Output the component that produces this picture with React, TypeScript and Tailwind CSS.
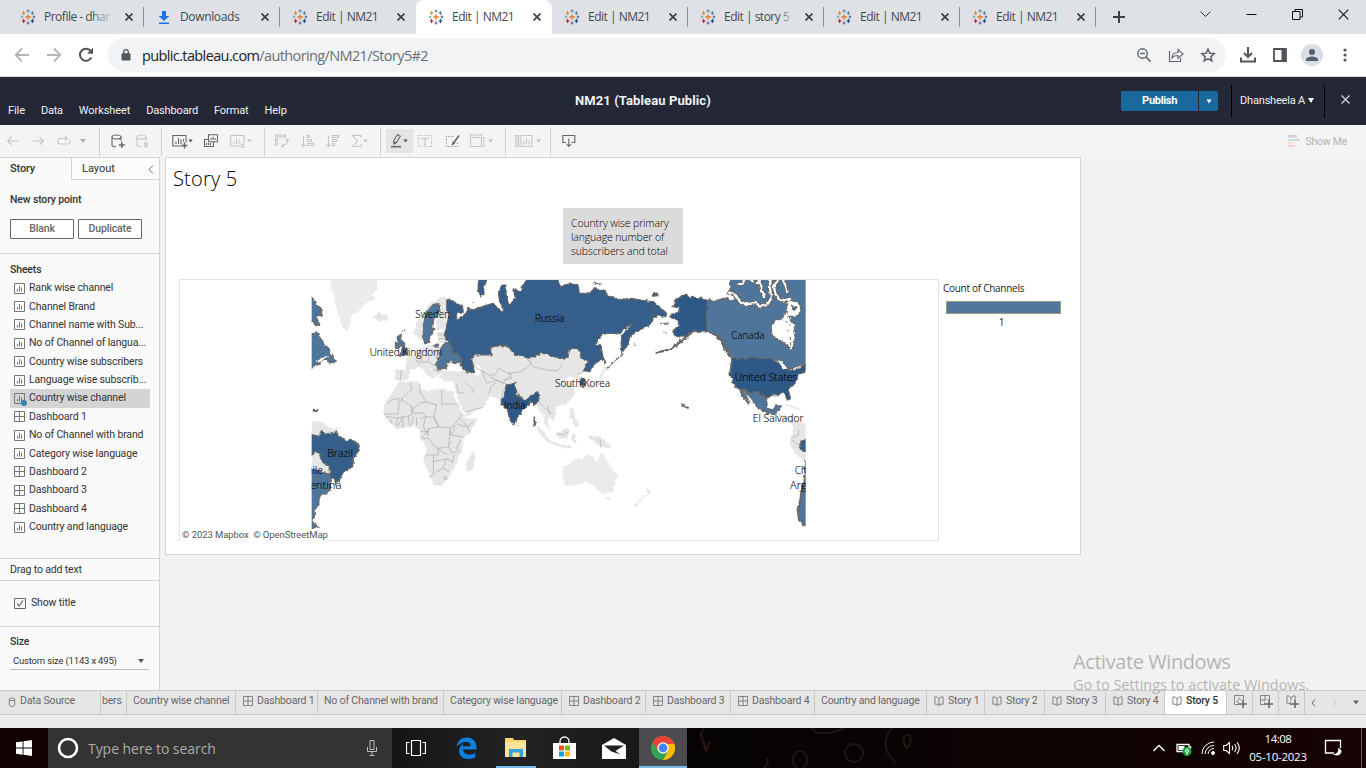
import React from "react";

const UI = "font-['Roboto','Liberation_Sans',sans-serif]";
const SEGOE = "font-['Open_Sans','Noto_Sans',sans-serif]";

function Tableau() {
  const plus = (x: number, y: number, r: number, c: string, w = 1.2) => (
    <path key={`${x}-${y}`} d={`M${x - r} ${y}h${2 * r}M${x} ${y - r}v${2 * r}`} stroke={c} strokeWidth={w} />
  );
  return (
    <svg width="16" height="16" viewBox="0 0 16 16" fill="none">
      {plus(8, 8, 2.8, "#eb7b30", 1.4)}
      {plus(8, 2, 1.4, "#5b879b")}
      {plus(8, 14, 1.4, "#5c6692")}
      {plus(2, 8, 1.4, "#7aa3b0", 1)}
      {plus(14, 8, 1.4, "#5c6692")}
      {plus(3.6, 4, 1.9, "#eb912b")}
      {plus(12.4, 4, 1.9, "#59879b")}
      {plus(3.6, 12, 1.9, "#c72035")}
      {plus(12.4, 12, 1.9, "#1f447e")}
    </svg>
  );
}

function X({ size = 8, color = "#3c4043", w = 1.8 }: { size?: number; color?: string; w?: number }) {
  return (
    <svg width={size} height={size} viewBox="0 0 8 8" className="shrink-0">
      <path d="M.5 .5L7.5 7.5M7.5 .5L.5 7.5" stroke={color} strokeWidth={w * 8 / size} />
    </svg>
  );
}

const browserTabs = ["Profile - dhar", "Downloads", "Edit | NM21", "Edit | NM21", "Edit | NM21", "Edit | story 5", "Edit | NM21", "Edit | NM21"];

function BrowserTabs() {
  return (
    <div className="flex h-[34px] shrink-0 bg-[#dee1e6] pl-2">
      {browserTabs.map((t, i) => (
        <div key={i} className={`relative flex h-[34px] w-[136px] shrink-0 items-center pl-3 ${i === 3 ? "rounded-t-lg bg-white" : ""}`}>
          {i === 1 ? (
            <svg width="16" height="16" viewBox="0 0 16 16" fill="#1a73e8"><path d="M6 2h4v5h3.3L8 12 2.700 7H6zM3 13.500h10V15H3z" /></svg>
          ) : <Tableau />}
          <div className="relative ml-2 w-[70px]">
            <span className={`${SEGOE} block whitespace-nowrap text-[12px] leading-[18px] text-[#45494d] ${i === 0 || i === 5 ? "tracking-[-0.5px]" : i === 1 ? "tracking-[-0.36px]" : "tracking-[-0.5px]"}`}>{t}</span>
            {(i === 0 || i === 5) && <div className={`absolute inset-y-0 right-0 bg-gradient-to-r from-[#dee1e600] to-[#dee1e6] ${i === 0 ? "w-6" : "w-4"}`} />}
          </div>
          <div className="ml-[11px] flex"><X w={1.7} /></div>
          {i !== 2 && i !== 3 && <div className="absolute right-0 top-[7px] h-5 w-px bg-[#8b8f94]" />}
        </div>
      ))}
      <div className="flex w-[46px] items-center justify-center">
        <svg width="12" height="12" viewBox="0 0 12 12"><path d="M0 6h12M6 0v12" stroke="#3c4043" strokeWidth="2" /></svg>
      </div>
      <div className="ml-auto flex items-start gap-[35px] pr-[17px] pt-[9px]">
        <svg width="11" height="11" viewBox="0 0 11 11" fill="none" stroke="#333"><path d="M.5 2.500l5 5 5-5" /></svg>
        <svg width="11" height="11" viewBox="0 0 11 11" stroke="#111"><path d="M.5 5.500h10" /></svg>
        <svg width="11" height="11" viewBox="0 0 11 11" fill="none" stroke="#111"><path d="M.5 2.500h7.500v8H.5zM3 2.500V.5h7.500v7.500H8" /></svg>
        <X size={11} color="#111" w={1.1} />
      </div>
    </div>
  );
}

function AddressBar() {
  return (
    <div className="flex h-[43px] shrink-0 items-center border-b border-[#d5d8dc] bg-white text-[#5f6368]">
      <svg className="ml-[14px]" width="16" height="16" viewBox="0 0 16 16" fill="none" stroke="#b4b7ba" strokeWidth="1.8"><path d="M15 8H2M8 1.500L1.700 8 8 14.500" /></svg>
      <svg className="ml-4" width="16" height="16" viewBox="0 0 16 16" fill="none" stroke="#b4b7ba" strokeWidth="1.8"><path d="M1 8h13M8 1.500L14.300 8 8 14.500" /></svg>
      <svg className="ml-4" width="16" height="16" viewBox="0 0 16 16"><path d="M13.300 10.500A6 6 0 1 1 12.600 4" fill="none" stroke="#50545a" strokeWidth="2" /><path d="M15 .8v6H9z" fill="#50545a" /></svg>
      <div className="ml-[14px] flex h-[34px] w-[1118px] items-center rounded-full bg-[#f1f3f4] pl-[13px]">
        <svg width="10" height="12" viewBox="0 0 10 12"><path d="M1 4.800h8V11H1z" fill="#54585d" stroke="#54585d" /><path d="M2.700 5V3a2.300 2.300 0 0 1 4.600 0v2" fill="none" stroke="#54585d" strokeWidth="1.300" /></svg>
        <span className={`${SEGOE} ml-[11px] mt-px text-[14.5px] tracking-[-0.62px] text-[#6b6f74]`}><span className="text-[#202124]">public.tableau.com</span>/authoring/NM21/Story5#2</span>
        <div className="ml-auto flex items-center gap-4 pr-[10px]">
          <svg width="16" height="16" viewBox="0 0 16 16" fill="none" stroke="#5f6368" strokeWidth="1.4"><circle cx="6.500" cy="6.500" r="4.700" /><path d="M4.200 6.500h4.600M10 10l4.600 4.600" strokeWidth="1.600" /></svg>
          <svg width="16" height="16" viewBox="0 0 16 16" fill="none" stroke="#5f6368" strokeWidth="1.1"><path d="M1.500 4v10.500h11V11M4 11c0-3 1.500-5.500 6-5.500V2.500L15 7l-5 4.300V8.500C7 8.500 5.200 9.200 4 11z" /></svg>
          <svg width="16" height="16" viewBox="0 0 16 16" fill="none" stroke="#5f6368" strokeWidth="1.500"><path d="M8 2l1.800 4.200 4.500.4-3.400 3 1 4.400L8 11.700 4.100 14l1-4.400-3.400-3 4.500-.4z" /></svg>
        </div>
      </div>
      <svg className="ml-[14px]" width="16" height="16" viewBox="0 0 16 16" fill="none" stroke="#50545a" strokeWidth="2"><path d="M8 0v9M4 6l4 4 4-4M1 10.500V14.500h14V10.500" /></svg>
      <svg className="ml-4" width="16" height="16" viewBox="0 0 16 16"><path d="M2 2h12v12H2z" fill="none" stroke="#50545a" strokeWidth="1.800" /><path d="M9.500 2H14v12H9.500z" fill="#50545a" /></svg>
      <svg className="ml-[13px]" width="22" height="22" viewBox="0 0 22 22"><circle cx="11" cy="11" r="11" fill="#dadde3" /><circle cx="11" cy="8" r="3" fill="#525e75" /><path d="M5 17v-1.500c0-2 4-3 6-3s6 1 6 3V17z" fill="#525e75" /></svg>
      <svg className="ml-[19.5px]" width="4" height="16" viewBox="0 0 4 16" fill="#50545a"><circle cx="2" cy="3" r="1.600" /><circle cx="2" cy="8" r="1.600" /><circle cx="2" cy="13" r="1.600" /></svg>
    </div>
  );
}

function Header() {
  return (
    <div className={`${UI} flex h-12 shrink-0 bg-[#242736] text-[#f0f0f2]`}>
      <div className="flex w-[575px] items-end gap-4 pb-[7px] pl-2 text-[11px] leading-[15px] tracking-[-0.1px]">
        <span>File</span><span className="tracking-[-0.2px]">Data</span><span>Worksheet</span><span className="tracking-[-0.15px]">Dashboard</span><span>Format</span><span>Help</span>
      </div>
      <div className="flex items-center text-[13px] font-bold tracking-[0.1px]">NM21 (Tableau Public)</div>
      <div className="ml-auto flex items-center">
        <div className="flex h-5 w-[77px] items-center justify-center rounded-l-[2px] bg-[#1a699e] text-[11px] font-bold tracking-[-0.3px] text-white">Publish</div>
        <div className="ml-px flex h-5 w-[19px] items-center justify-center rounded-r-[2px] bg-[#1a699e]"><svg width="6" height="5" viewBox="0 0 6 5"><path d="M.5 .5h5L3 4.500z" fill="#fff" /></svg></div>
        <div className="ml-[13px] h-8 w-px bg-black" />
        <span className="ml-2 text-[11px] tracking-[-0.2px]">Dhansheela A</span>
        <svg className="ml-[3px]" width="6" height="6" viewBox="0 0 6 6"><path d="M0 0h6L3 5z" fill="#fff" /></svg>
        <div className="ml-[10px] h-8 w-px bg-black" />
        <div className="mb-1 ml-4 mr-[16px]"><X size={9} color="#cfd0d4" w={1.3} /></div>
      </div>
    </div>
  );
}

function Ico({ children, dim, cls = "", w = 16 }: { children: React.ReactNode; dim?: boolean; cls?: string; w?: number }) {
  return (
    <svg className={`shrink-0 ${cls}`} width={w} height="16" viewBox={`0 0 ${w} 16`} fill="none" stroke={dim ? "#c6c6c6" : "#666"} strokeWidth="1.1">{children}</svg>
  );
}
const Caret = ({ dim, cls = "" }: { dim?: boolean; cls?: string }) => (
  <svg className={`shrink-0 ${cls}`} width="5" height="4" viewBox="0 0 5 4"><path d="M.3 .5h4.400L2.500 3.500z" fill={dim ? "#bdbdbd" : "#555"} /></svg>
);
const Sep = ({ cls = "" }: { cls?: string }) => <div className={`h-[29px] w-px shrink-0 bg-[#d0d0d0] ${cls}`} />;

function Toolbar() {
  return (
    <div className="flex h-8 shrink-0 items-center bg-[#f4f4f4]">
      <Ico dim cls="ml-[5px]"><path d="M13.500 8h-11M6.500 4l-4 4 4 4" /></Ico>
      <Ico dim cls="ml-[9px]"><path d="M2.500 8h11M9.500 4l4 4-4 4" /></Ico>
      <Ico dim cls="ml-[10px]"><path d="M10 5.500H4.500a2.700 2.700 0 0 0 0 5.500h7a2.700 2.700 0 0 0 2.200-4.500M9 3.500l2.300 2L9 7.500" /></Ico>
      <svg className="ml-2 shrink-0" width="6" height="4" viewBox="0 0 6 4"><path d="M0 0h6L3 4z" fill="#b0b0b0" /></svg>
      <Sep cls="ml-[13px]" />
      <Ico cls="ml-[10px]"><ellipse cx="6.500" cy="4" rx="4.500" ry="2" /><path d="M2 4v8c0 1 2 1.800 4 1.800M11 4v4" /><path d="M8.800 12h6M11.800 9v6" strokeWidth="1.500" /></Ico>
      <Ico dim cls="ml-[9px]"><ellipse cx="6.500" cy="4" rx="4.500" ry="2" /><path d="M2 4v8c0 1 2 1.800 4 1.800M11 4v4" /><path d="M9.700 9v5.500M11.800 9v5.500" strokeWidth="1.500" /></Ico>
      <Sep cls="ml-[10px]" />
      <Ico cls="ml-[10px]"><path d="M10 13H.8V2.500H14v7M4 11V8.500M6.500 11V5M9 11V6.500M11.500 8.500V6" /><path d="M9.500 12.500h6M12.500 9.500v6" strokeWidth="1.500" /></Ico>
      <Caret cls="ml-0" />
      <Ico cls="ml-[10px]"><path d="M5.500 1.800h9v7h-9zM8 7V5M10 7V3.500M12 7V5M5 6.500H1.500v7h9V9" /><path d="M3.500 12v-2M5.500 12v-2M7.500 12v-2" /></Ico>
      <Ico dim cls="ml-[11px]"><path d="M10 13H.8V2.500H14v7M4 11V8.500M6.500 11V5M9 11V6.500M10.500 10.500l4 4M14.500 10.500l-4 4" /></Ico>
      <Caret dim cls="ml-px" />
      <Sep cls="ml-[12px]" />
      <Ico dim cls="ml-[9px]"><path d="M1.500 2h2v2h-2zM5.500 2h2v2h-2zM9.500 2h2v2h-2zM1.500 6h2v2h-2zM1.500 10h2v2h-2zM13 6c1 5-1.500 6.500-5 7M11.500 7.500L13 6l2 1.500M9.500 11.200L7.500 13l2 1.700" /></Ico>
      <Ico dim cls="ml-[10px]"><path d="M3.500 2.500v11M1.500 11.500l2 2 2-2M7.500 2.500h2v2h-2zM7.500 6.500h4v2h-4zM7.500 10.500h6v2h-6z" /></Ico>
      <Ico dim cls="ml-[9px]"><path d="M3.500 2.500v11M1.500 11.500l2 2 2-2M7.500 2.500h6v2h-6zM7.500 6.500h4v2h-4zM7.500 10.500h2v2h-2z" /></Ico>
      <Ico dim cls="ml-[10px]"><path d="M10 5V2.500H1.500L6.500 8l-5 5.500H10V11" /></Ico>
      <Caret dim cls="ml-[-4px]" />
      <Sep cls="ml-[12px]" />
      <div className="ml-[5px] flex h-6 w-[27px] items-center bg-[#e4e4e4] pl-[4px]">
        <Ico w={12}><path d="M4 11l-.5-3 4-6.500 2.800 1.700L6.500 9.500zM3.500 8.500L6.300 10" /><path d="M1 13.700h10" strokeWidth="1.600" /></Ico>
        <Caret cls="ml-px" />
      </div>
      <Ico dim cls="ml-[4px]"><path d="M1.500 2.500h13v11h-13z" strokeDasharray="1.500 1" /><path d="M5 6.500V5.500h6v1M8 5.500v6M6.800 11.500h2.400" /></Ico>
      <Ico cls="ml-[12px]"><path d="M8 3.500H1.500v10h11v-5" strokeDasharray="1.500 1.500" stroke="#999" /><path d="M14 2.500L9 9.500M8.500 8.500l-.7 2.500 2-1.200" strokeWidth="1.600" /></Ico>
      <Ico dim cls="ml-[8px]"><path d="M1.500 4.500h11v9h-11zM1.500 1v2M12.500 1v2M1.500 2h11M13.800 4.500h2M13.800 13.500h2M14.800 4.500v9" /></Ico>
      <Caret dim cls="ml-[3px]" />
      <Sep cls="ml-[12px]" />
      <Ico dim cls="ml-[9px]" w={18}><path d="M.8 2.500h3v2.500h-3zM.8 6.700h3v2.500h-3zM.8 10.900h3v2.500h-3zM6 2.500h11v11H6zM9 11.500V8M11.500 11.500V5M14 11.500V7" /></Ico>
      <Caret dim cls="ml-[3px]" />
      <Sep cls="ml-[9px]" />
      <Ico cls="ml-[10px]"><path d="M5 9.500H1.800v-7h12v7H10.500M7.800 5.500v8M5.500 11l2.300 2.500 2.300-2.500" /></Ico>
      <svg className="ml-auto" width="12" height="14" viewBox="0 0 12 14"><path d="M0 1h9v2.500H0z" fill="#d2c9d9" /><path d="M0 5h12v2H0z" fill="#ccd9e8" /><path d="M0 8h5v2H0z" fill="#f9ddd0" /><path d="M0 11h7v2H0z" fill="#f4cccc" /></svg>
      <span className={`${UI} ml-[6px] mr-[19px] mt-[2px] text-[10.5px] leading-[14px] tracking-[-0.25px] text-[#b3b3b3]`}>Show Me</span>
    </div>
  );
}

type Kind = "sheet" | "dash" | "story" | "db";
function KindIcon({ kind, size = 11 }: { kind: Kind; size?: number }) {
  return (
    <svg className="shrink-0" width={size} height={size} viewBox="0 0 11 11" fill="none" stroke="#777" strokeWidth="1">
      {kind === "sheet" && <path d="M.5 .5h10v10H.5zM3.500 8.500V6M5.500 8.500V3M7.500 8.500V4.500" />}
      {kind === "dash" && <path d="M.5 .5h10v10H.5zM5.500 .5v10M.5 5.500h10" />}
      {kind === "story" && <path d="M3.500 9H1V1h2l2.500 2L8 1h2v8H7.500M5.500 3v7.500M3.500 9l2 1.500 2-1.500" />}
      {kind === "db" && <path d="M2.500 2.500v6c0 2.500 6 2.500 6 0v-6c0-2-6-2-6 0s6 2 6 0" />}
    </svg>
  );
}

const sheets: [string, Kind][] = [
  ["Rank wise channel", "sheet"], ["Channel Brand", "sheet"], ["Channel name with Sub...", "sheet"], ["No of Channel of langua...", "sheet"],
  ["Country wise subscribers", "sheet"], ["Language wise subscrib...", "sheet"], ["Country wise channel", "sheet"], ["Dashboard 1", "dash"],
  ["No of Channel with brand", "sheet"], ["Category wise language", "sheet"], ["Dashboard 2", "dash"], ["Dashboard 3", "dash"], ["Dashboard 4", "dash"], ["Country and language", "sheet"],
];

function Sidebar() {
  return (
    <div className={`${UI} flex w-40 shrink-0 flex-col border-r border-t border-[#d4d4d4] bg-[#fafafa] text-[10.5px] leading-[14px] tracking-[-0.15px] text-[#333]`}>
      <div className="flex h-[22px] text-[11px]">
        <div className="w-[71px] pl-[10px] pt-[4px] font-medium">Story</div>
        <div className="flex flex-1 items-start border-b border-l border-[#d4d4d4] bg-[#fbfbfb] pl-[10px] pt-[4px]">
          <span className="tracking-normal">Layout</span>
          <svg className="ml-auto mr-[5px] mt-[3px]" width="6" height="9" viewBox="0 0 6 9" fill="none" stroke="#666"><path d="M5 .5L1 4.500l4 4" /></svg>
        </div>
      </div>
      <div className="pl-[10px] pt-[13px] font-medium">New story point</div>
      <div className="mt-[12px] flex gap-[4px] pl-[10px] font-medium text-[#666]">
        <div className="flex h-5 w-16 items-center justify-center rounded-[1px] border border-[#666] bg-white">Blank</div>
        <div className="flex h-5 w-16 items-center justify-center rounded-[1px] border border-[#666] bg-white">Duplicate</div>
      </div>
      <div className="mt-[14px] border-t border-[#d4d4d4] pl-[10px] pt-[9px] font-medium">Sheets</div>
      <div className="mt-[2px] flex flex-col pl-[10px]">
        {sheets.map(([name, kind], i) => (
          <div key={name} className={`flex h-[18.38px] w-[140px] items-center whitespace-nowrap pl-1 ${i === 6 ? "bg-[#d4d4d4]" : ""}`}>
            <div className="relative mr-1 flex">
              <KindIcon kind={kind} />
              {i === 6 && <div className="absolute left-[7px] top-[7px] size-[6px] rounded-full bg-[#3583ad]" />}
            </div>
            <span>{name}</span>
          </div>
        ))}
      </div>
      <div className="mt-[22px] h-[22px] border-t border-[#d4d4d4] pl-[10px] pt-[4px]">Drag to add text</div>
      <div className="flex h-[47px] items-center border-y border-[#d4d4d4] pl-[14px]">
        <svg width="12" height="11" viewBox="0 0 12 11" fill="none" stroke="#666"><path d="M.5 .5h11v10H.5z" /><path d="M3 5.500l2 2.500 4-5.500" strokeWidth="1.200" /></svg>
        <span className="-mt-px ml-[5px]">Show title</span>
      </div>
      <div className="pl-[10px] pt-[8px] font-medium">Size</div>
      <div className="ml-[10px] mt-[4px] flex h-[17px] w-[139px] items-center border-b border-[#bbb] pl-[3px] pr-[5px] text-[9.5px]">
        <span className="tracking-[-0.18px]">Custom size (1143 x 495)</span>
        <svg className="ml-auto" width="6" height="4" viewBox="0 0 6 4"><path d="M0 0h6L3 4z" fill="#555" /></svg>
      </div>
    </div>
  );
}

const DARK = "#2d5986";
const RUS = "#345f8a";
const MID = "#50749b";
const ARCTIC_CHANNELS = "M1288 52L1306 60 1318 78 1340 88 1362 84 1382 92 1402 88 1414 70 1410 40 1412 8M1378 20L1386 50 1392 66M1336 8L1330 22 1318 28M1434 10L1422 36 1426 56 1436 72 1452 76 1470 72M1350 8l8 12M1448 14l10 20 4 14M1380 8l-6 16";

function WorldMap() {
  const label = (x: number, y: number, s: string, w: number) => (
    <text key={s + x} x={x} y={y + 3} textLength={w} lengthAdjust="spacingAndGlyphs">{s}</text>
  );
  return (
    <svg width="758" height="260" viewBox="-360 15 2274 780" className="block">
      <defs>
        <clipPath id="world"><path d="M35 0h1482v800H35z" /></clipPath>
        <filter id="coast" x="-1%" y="-1%" width="102%" height="102%">
          <feTurbulence type="fractalNoise" baseFrequency="0.075" numOctaves="2" seed="4" />
          <feDisplacementMap in="SourceGraphic" scale="12" xChannelSelector="R" yChannelSelector="G" />
        </filter>
      </defs>
      <g clipPath="url(#world)">
        <g fill="#e6e6e6" stroke="#dedede" strokeWidth="1.500" filter="url(#coast)">
          <path fill="#ebebeb" d="M92 5L95 45 103 48 105 80 112 98 118 125 128 150 140 170 148 148 155 118 175 108 200 82 225 72 215 60 230 45 228 5Z" />
          <path d="M222 125L235 115 262 122 258 135 240 140 228 134ZM345 160L342 175 360 190 370 180 368 160 380 110 400 85 430 80 445 72 425 65 400 80 380 95 372 125 355 135ZM418 85L438 75 440 100 448 120 435 160 412 165 408 145 420 125ZM412 172L434 170 440 200 415 205Z" />
          <path d="M318 250L345 240 350 228 375 215 415 205 440 245 425 265 440 282 425 295 410 303 395 285 380 270 362 268 345 283 332 285 325 310 300 318 287 315 287 285 318 285Z" />
          <path d="M355 268L372 268 405 300 398 312 370 285ZM418 305L440 287 480 292 515 295 522 285 515 255 525 238 575 240 570 218 600 208 640 222 650 240 690 248 725 235 760 245 800 247 812 222 835 222 845 250 865 262 850 290 835 300 850 315 855 332 842 335 835 312 810 305 800 315 815 320 822 340 820 365 800 385 775 392 765 400 770 415 757 438 748 418 742 440 748 460 735 450 732 420 718 400 712 380 690 375 650 360 640 370 605 375 580 366 565 360 563 375 545 398 500 422 485 395 468 355 462 318 430 318Z" />
          <path d="M300 320L340 322 352 318 355 330 380 350 400 345 430 343 462 350 458 358 470 385 488 415 500 432 528 432 525 445 505 475 488 492 490 525 472 545 468 565 455 590 440 615 425 630 402 630 390 600 378 570 370 550 382 525 372 500 360 485 362 462 340 450 318 455 290 462 262 435 250 415 258 385 275 355Z" />
          <path d="M522 530L527 545 515 585 503 587 500 565 510 545ZM650 444l6 4-1 10-5-2zM709 452L738 480 755 508 745 502 722 478ZM770 475L805 458 808 475 798 492 775 490ZM812 400l10 5-2 18 14 18 2 12-10 2-8-20-8-10zM860 485L895 488 920 500 938 520 900 516 880 498ZM755 502l30 6 28 8-2 4-34-6-22-8zM815 480l12 0-4 10 6 14-6 0-8-12z" />
          <path fill="#eaeaea" d="M790 580L810 565 835 550 845 555 858 540 880 545 878 555 895 562 905 530 915 550 930 575 950 600 945 625 935 652 910 655 890 640 875 630 860 620 825 630 798 632 790 600ZM918 668L930 668 923 678ZM1040 638L1052 652 1030 668 1010 694 1005 690 1025 668 1042 655ZM855 338L880 325 895 315 900 300 908 284 918 278 908 300 900 322 870 342Z" />
          <path d="M1425 412L1460 422 1480 438 1520 450 1520 560 1490 540 1470 505 1475 480 1480 452 1455 432ZM1455 388l25 5 20 10-8 0-35-12zM35 440L60 438 90 460 115 460 112 476 68 476 60 484 35 480ZM35 525L62 530 70 562 96 590 90 604 78 592 35 584Z" />
        </g>
        <path fill="#fff" d="M526 268l14 4 2 18-6 14-12-6-2-16zM482 268l18 6 14 14-20 0-16-8zM430 276l40 0 12 8-30 2-24 0z" />
        <g fill="none" stroke="#b0b0b0" strokeWidth="2.200" strokeLinejoin="round">
          <path d="M330 322l5 22-28 24-5 14M298 370l-24 5-10 12M302 370l38 30 22-18M358 325l3 30 18 25M362 382l20 0 28 8M425 345v42h48M410 388l-8 40-24-4-8-10-35 0 0-25M298 372l-4 45-42 0M340 400l-5 20-28 8-15 30M308 428l2 30M325 425l5 32M378 424l-8 30 12 25M402 428l15 28 34 2 12-8 14-20 8-15M416 456l-30 5-20 30M451 458l2 22 36 6M450 465l-4 50-30 5-16-10-15-20-20 2M415 520l0 20-35 0 0 5M446 515l10 20 22-10M400 540l0 60-12 5M400 560l40-8 20 10M440 550l-12 30-20 12M428 580l20 10M415 455l-12-30M385 460l0 25M463 450l-2 20-12 10M478 430l25 25 5 18M432 605l8 0 0 8-8 0z" />
          <path d="M258 425l35 4-4 22M270 432l6 12M293 430l18-6M340 425l-6 28M350 428l0 24M362 432l18-8M360 470l25 0M482 495l-14 28M456 500l-10 8M462 540l-6 24M410 520l30 18M520 440l-18 16-30-8" />
          <path d="M515 255l10 20 40 25 20 0 10-20 30 15 40-5 25-20 5-22M545 285l15 40 32-10 15 10 30-30M590 320l-18 18-5 20M600 320l25 10-15 15-5 22M625 290l10 20-25 5M470 325l5 28 20 2M495 322l25 22-2 10M500 410l30-8 20-5M680 250l20 25 48 12 25 0 15-18M570 305l28 15M720 382l10 14 28 20M742 392l8 28" />
          <path d="M345 255l20 5M365 240l0 20 18 2M385 235l0 25 14 10M358 225l4 15M378 220l30 12M398 270l15 0M400 285l20 5M305 285l-5 30M360 268l-10-8M405 245l10 5M832 298l36-18M1475 490l20-10 0-15M1475 495l22 15M900 488l2 28M772 475l20 5 14-10M515 290l-16 4-12-6M412 178l24 2M414 192l22-2" />
        </g>
        <g stroke="#6c6862" strokeWidth="3.200" strokeLinejoin="round" filter="url(#coast)">
          <g fill={MID}>
            <path d="M30 62L40 72 48 88 68 108 66 125 58 120 50 128 60 150 48 155 40 140 30 138ZM30 180L50 170 62 190 75 210 88 222 92 245 98 240 106 262 88 264 80 250 60 262 50 272 30 282Z" />
            <path d="M30 582L75 592 98 602 90 620 92 642 75 658 60 662 60 685 45 700 46 720 36 735 38 745 58 755 30 762Z" />
            <path d="M402 85L418 90 420 110 402 130 398 155 402 165 390 185 386 202 375 207 370 195 370 150 374 128 385 105Z" />
            <path d="M432 205L447 200 457 218 456 230 485 245 482 260 462 266 455 258 440 266 440 280 415 282 406 268 412 255 420 248 417 230ZM402 208l14 0-2 8-12 0z" />
            <path d="M290 186L304 178 302 193 314 205 324 237 308 242 298 240 308 220 297 208ZM286 205l10 0 2 12-12 6zM310 170l5-6" />
            <path d="M1222 72L1245 81 1260 71 1280 69 1295 78 1312 70 1306 58 1290 46 1288 5 1525 5 1525 262 1490 275 1470 287 1445 262 1415 250 1295 250 1270 215 1260 195 1235 172 1220 170Z" />
            <path d="M1330 343L1350 350 1375 350 1400 372 1402 398 1418 405 1428 392 1444 392 1438 408 1425 416 1400 412 1375 400 1358 380 1345 362ZM1318 340l10 5 22 38-6 2-20-26z" />
            <path stroke="#67686a" strokeWidth="6" d="M1520 555L1514 600 1508 630 1500 680 1493 705 1497 735 1525 760Z" />
          </g>
          <g fill={RUS}>
            <path d="M30 478L58 484 65 466 76 478 108 470 115 484 140 495 165 498 178 512 174 530 162 545 158 575 140 585 125 600 118 618 108 628 98 612 90 602 94 588 80 570 65 560 60 540 50 528 30 545Z" />
            <path d="M440 75L450 72 470 85 488 95 490 112 472 112 468 130 480 130 500 112 500 100 525 105 545 95 580 85 604 108 612 105 600 85 595 55 605 30 618 30 618 60 625 85 628 92 645 70 640 40 655 50 665 48 668 30 680 15 690 5 775 5 782 35 810 25 835 30 838 55 865 55 880 40 915 48 925 62 950 72 980 75 995 70 1020 75 1060 80 1085 100 1100 115 1098 128 1075 122 1060 130 1055 145 1030 160 1005 170 990 185 985 205 965 235 963 200 967 180 995 150 965 165 960 178 930 175 905 180 885 210 902 212 908 240 915 268 905 252 880 270 868 290 850 287 865 262 845 250 835 222 812 222 800 247 785 250 760 245 740 238 725 235 690 250 645 240 625 215 600 210 570 218 575 240 522 240 515 255 524 290 515 296 490 282 480 262 484 246 457 230 455 212 440 195 433 180 440 150 448 120 440 105Z" />
            <path d="M535 5L560 15 552 40 552 62 540 62 534 45ZM1058 56l14-2 2 8-16 2zM1080 145l28 0M1090 168l10 4M1148 118l-4-8M880 25l25 2M518 82l6 4M920 280l50-45M1000 205l8 6M1061 82v40" />
            <path d="M1525 490L1502 500 1497 515 1505 525 1525 528Z" />
          </g>
          <g fill={DARK}>
            <path d="M622 330L645 325 650 345 650 360 670 372 685 375 692 362 715 353 720 366 710 385 700 392 696 378 684 392 665 408 652 428 648 442 640 450 630 435 622 405 605 390 603 375 612 362ZM702 425l4 5 0 20-4 3zM842 312l10-2 4 20-9 6-6-8zM40 403l14 1-2 5-12-1z" />
            <path d="M1222 72L1220 170 1205 172 1180 165 1165 180 1150 195 1125 210 1100 225 1066 235 1120 215 1145 195 1155 182 1130 185 1118 170 1135 150 1135 140 1112 125 1120 115 1135 112 1138 98 1118 95 1125 78 1145 62 1158 57 1170 66 1195 68Z" />
            <path d="M1295 250L1415 250 1450 275 1470 290 1495 282 1525 258 1525 285 1495 300 1485 325 1465 345 1472 370 1465 378 1455 355 1410 362 1402 372 1375 350 1350 352 1330 343 1310 338 1298 320 1290 298Z" />
            <path fill="none" strokeWidth="6" d="M1142 388l12 3 12 9M1064 234l30-6 32-14 24-16M1238 174l22 16 14 28 18 28M1160 185l22-18 20 4" />
          </g>
          <g fill="none" strokeLinecap="round">
            <path strokeWidth="13" d={ARCTIC_CHANNELS} />
            <path strokeWidth="7" stroke="#fff" d={ARCTIC_CHANNELS} />
          </g>
          <path fill="#fff" d="M1413 150L1430 134 1446 134 1452 118 1462 108 1458 84 1468 76 1496 82 1504 100 1498 120 1476 126 1474 136 1484 150 1482 172 1486 190 1478 205 1480 222 1470 226 1462 206 1450 202 1430 194 1416 176Z" />
          <path fill={MID} d="M1476 92l12 4-4 10-10-4zM1464 124l8 2-4 6z" />
        </g>
        <g fill="#fff" filter="url(#coast)">
          <path d="M1435 255l12 5 14 20-10 4-10-16zM60 245l25 0-20 14-15 4z" />
        </g>
        <path fill={MID} stroke="#6c6862" strokeWidth="3" d="M1456 140l6 2M1468 150l4 0M1462 165l4 4M1470 185l2 10M1472 212l0-10" />
        <g className="font-['Open_Sans','Noto_Sans',sans-serif] text-[30px] font-light" fill="#000" stroke="#000" strokeWidth=".3">
          {label(346, 125, "Sweden", 104)}
          {label(209, 239, "United Kingdom", 217)}
          {label(704, 139, "Russia", 90)}
          {label(1294, 188, "Canada", 99)}
          {label(765, 332, "South Korea", 165)}
          {label(612, 398, "India", 64)}
          {label(1304, 314, "United States", 188)}
          {label(1358, 437, "El Salvador", 153)}
          {label(82, 542, "Brazil", 77)}
          {label(1, 593, "Chile", 68)}
          {label(-22, 638, "Argentina", 146)}
          {label(1484, 593, "Chile", 68)}
          {label(1470, 638, "Argentina", 146)}
        </g>
      </g>
    </svg>
  );
}

function Canvas() {
  return (
    <div className="ml-[5px] flex h-[398px] w-[916px] shrink-0 flex-col border border-[#d4d4d4] bg-white font-['Open_Sans','Noto_Sans',sans-serif] text-[#222]">
      <div className="h-[50px] pl-[7px] pt-[8px] text-[20px] font-light leading-[25px] tracking-[0.2px] text-black">Story 5</div>
      <div className="ml-[397px] h-[56px] w-[120px] bg-[#dbdbdb] pl-2 pt-[8px] text-[10.5px] font-light leading-[14px] tracking-[-0.12px] text-black">
        <div className="whitespace-nowrap">Country wise primary<br />language number of<br />subscribers and total</div>
      </div>
      <div className="mt-[15px] flex pl-[13px]">
        <div className="relative h-[262px] w-[760px] border border-[#e2e2e2]">
          <WorldMap />
          <div className={`${UI} absolute -bottom-px left-0 bg-white/80 pl-[2px] text-[9.5px] leading-[12px] tracking-[-0.08px] text-[#555]`}>© 2023 Mapbox&nbsp; © OpenStreetMap</div>
        </div>
        <div className="pl-[4px] pt-[2px] text-[10px] leading-[14px] tracking-[-0.28px] text-[#222]">
          <div>Count of Channels</div>
          <div className="ml-[3px] mt-[6px] h-[13px] w-[115px] border border-[#9b9a85] bg-[#52779f]" />
          <div className="mt-px w-[117px] text-center">1</div>
        </div>
      </div>
    </div>
  );
}

const bottomTabs: [string, Kind, string][] = [
  ["Country wise channel", "sheet", "w-[109px]"], ["Dashboard 1", "dash", "w-[82px]"], ["No of Channel with brand", "sheet", "w-[126px]"],
  ["Category wise language", "sheet", "w-[118px]"], ["Dashboard 2", "dash", "w-[84px]"], ["Dashboard 3", "dash", "w-[85px]"],
  ["Dashboard 4", "dash", "w-[84px]"], ["Country and language", "sheet", "w-[112px]"], ["Story 1", "story", "w-[58px]"],
  ["Story 2", "story", "w-[60px]"], ["Story 3", "story", "w-[61px]"], ["Story 4", "story", "w-[59px]"], ["Story 5", "story", "w-[62px]"],
];

function SheetTabs() {
  return (
    <div className={`${UI} flex h-[25px] shrink-0 whitespace-nowrap border-y border-[#c8c8c8] bg-[#e6e6e6] text-[10.5px] leading-[19px] tracking-[-0.17px] text-[#666]`}>
      <div className="flex w-[101px] items-center border-r border-[#c8c8c8] pb-[4px] pl-[7px]"><span className="mt-[2px]"><KindIcon kind="db" size={10} /></span><span className="ml-[3px]">Data Source</span></div>
      <div className="w-[26px] border-r border-[#c8c8c8] pl-px">bers</div>
      {bottomTabs.map(([name, kind, w], i) => (
        <div key={name} className={`flex shrink-0 items-center border-r border-[#c8c8c8] pb-[4px] ${w} ${kind === "sheet" ? "pl-[6px]" : "pl-[7px]"} ${i === 12 ? "bg-white font-medium text-[#333]" : ""}`}>
          {kind !== "sheet" && <span className="mr-[4px] mt-px"><KindIcon kind={kind} size={10} /></span>}
          <span>{name}</span>
        </div>
      ))}
      {(["sheet", "dash", "story"] as Kind[]).map((k) => (
        <div key={k} className="relative w-[26px] border-r border-[#c8c8c8] pl-[7px] pt-[4px]">
          <KindIcon kind={k} size={10} />
          <svg className="absolute left-[11px] top-[8px]" width="9" height="9" viewBox="0 0 9 9"><path d="M1 1h8v8H1z" fill="#e6e6e6" /><path d="M0 5h9M5 1v8" stroke="#666" strokeWidth="1.500" /></svg>
        </div>
      ))}
      <div className="flex flex-1 items-center justify-between pl-[6px] pr-[7px]">
        <svg width="5" height="8" viewBox="0 0 5 8" fill="none" stroke="#666"><path d="M4 .5L1 4l3 3.500" /></svg>
        <svg width="5" height="8" viewBox="0 0 5 8" fill="none" stroke="#c4c4c4"><path d="M1 .5L4 4 1 7.500" /></svg>
        <svg width="6" height="5" viewBox="0 0 6 5"><path d="M0 .5h6L3 4.500z" fill="#666" /></svg>
      </div>
    </div>
  );
}

function Taskbar() {
  return (
    <div className="relative flex h-10 shrink-0 items-center bg-gradient-to-r from-[#140303] via-[#050303] to-[#170303] text-white">
      <div className="flex w-12 justify-center">
        <svg width="16" height="16" viewBox="0 0 16 16" fill="#fff"><path d="M0 2.300l6.600-.9v6.200H0zM7.500 1.300L16 0v7.600H7.500zM0 8.500h6.600v6.200L0 13.800zM7.500 8.500H16V16l-8.500-1.200z" /></svg>
      </div>
      <div className="flex h-10 w-[344px] items-center bg-[#333] pl-[9px]">
        <svg width="22" height="22" viewBox="0 0 22 22"><circle cx="11" cy="11" r="9" fill="none" stroke="#fff" strokeWidth="2.600" /></svg>
        <span className={`${SEGOE} ml-[9px] text-[14px] tracking-[-0.05px] text-[#acacac]`}>Type here to search</span>
        <svg className="ml-auto mr-[14px]" width="12" height="18" viewBox="0 0 12 18" fill="none" stroke="#c0c0c0"><path d="M4 1.500h4v9H4zM1.500 8v4.500h9V8M6 12.500v4M3.500 16.500h5" /></svg>
      </div>
      <div className="flex h-10 w-[247px] items-center bg-gradient-to-r from-[#151517] via-[#232326] to-[#18181a]">
        <svg className="ml-[14px]" width="20" height="18" viewBox="0 0 20 18" fill="none" stroke="#fff" strokeWidth="1.200"><path d="M5.500 1.500h9v15h-9zM3.500 3.500h-3v11h3M16.500 3.500h3v11h-3" /></svg>
        <svg className="ml-[30px]" width="21" height="22" viewBox="0 0 21 22"><path d="M.5 10C1.500 3.500 6 .5 11 .5c6 0 9.500 4.500 9.500 9.500v2.500H7c.3 3.300 3 5 6.300 5 2.400 0 4.500-.7 6-1.700v4.500c-2 1.100-4.500 1.700-7 1.700C6.500 22 3 18.500 3 14c0-3.500 2-6.500 5-8C7 7 6.500 8 6.500 9.300h8C14.500 6.500 13 5 10.500 5 6.500 5 2.500 7 .5 10z" fill="#0f7fdc" /></svg>
        <div className="relative ml-[19px] flex h-10 w-10 items-center justify-center">
          <svg width="22" height="20" viewBox="0 0 22 20"><path d="M0 0h8l1 2h12v17H0z" fill="#f7d66e" /><path d="M0 4h21v15H0z" fill="#fde49a" /><path d="M4 19v-8h14v8h-3.500v-4.500h-7V19z" fill="#35a4dc" /></svg>
          <div className="absolute bottom-0 left-0 h-[2px] w-10 bg-[#76b9ed]" />
        </div>
        <svg className="ml-[17px]" width="23" height="24" viewBox="0 0 23 24"><path d="M7 8V5.500a4.500 4.500 0 0 1 9 0V8" fill="none" stroke="#fff" strokeWidth="1.300" /><path d="M0 7h23v16H0z" fill="#fff" /><path d="M6 9.500h5v5H6z" fill="#f25022" /><path d="M12 9.500h5v5h-5z" fill="#7fba00" /><path d="M6 15.500h5v5H6z" fill="#00a4ef" /><path d="M12 15.500h5v5h-5z" fill="#ffb900" /></svg>
        <svg className="ml-[26px]" width="24" height="21" viewBox="0 0 24 21"><path d="M0 7L12 0l12 7v14H0z" fill="#fff" /><path d="M2 7.500h20l-8.500 5.500 5 3.500-9-3z" fill="#202022" /></svg>
      </div>
      <div className="relative flex h-10 w-12 items-center justify-center bg-[#4c4c50]">
        <svg width="24" height="24" viewBox="0 0 24 24"><circle cx="12" cy="12" r="12" fill="#34a353" /><path d="M1.600 6A12 12 0 0 1 22.400 6H12L7 15z" fill="#ea4335" /><path d="M22.400 6A12 12 0 0 1 12 24l5-9-1-8z" fill="#fbbc05" /><path d="M12 6h10.400l.6 2H13z" fill="#ea4335" /><circle cx="12" cy="12" r="5.700" fill="#fff" /><circle cx="12" cy="12" r="4.400" fill="#4285f4" /></svg>
        <div className="absolute bottom-0 left-0 h-[2px] w-12 bg-[#76b9ed]" />
      </div>
      <svg className="ml-2" width="280" height="40" viewBox="0 0 280 40" fill="none" stroke="#1c1815" strokeWidth="2"><circle cx="159" cy="25" r="9" /><ellipse cx="105" cy="32" rx="7" ry="9" /><path d="M8 0c-3 9 0 14 5 22M72 30c2 4 0 9-4 10M197 0c-10 12-8 24 4 35M117 0c2 7 16 7 33 0M210 8c6-4 8 4 2 12-4-4-4-8-2-12" /><path d="M5 5l6 18 4-10" stroke="#2c1410" /></svg>
      <div className="ml-auto flex h-10 items-center">
        <svg width="12" height="8" viewBox="0 0 12 8" fill="none" stroke="#fff" strokeWidth="1.300"><path d="M.5 7L6 1.500 11.500 7" /></svg>
        <svg className="ml-[11px] mt-[2px]" width="16" height="16" viewBox="0 0 16 16"><path d="M1 3.500h12v7H1zM14.500 5v3" fill="none" stroke="#fff" strokeWidth="1.300" /><path d="M2.500 5h6v4h-6z" fill="#fff" /><circle cx="11" cy="10.500" r="4.500" fill="#14a035" /><path d="M11 7.500l2 2.700-2 1.800-2-1.800zM11 9v5" fill="none" stroke="#fff" strokeWidth=".9" /></svg>
        <svg className="ml-[9px]" width="14" height="14" viewBox="0 0 14 14" fill="none" stroke="#fff" strokeWidth="1"><path d="M1 13A12 12 0 0 1 13 1M4 13A9 9 0 0 1 13 4.500M7 13A6 6 0 0 1 13 7.500" /><circle cx="12" cy="12" r="1.500" fill="#fff" /></svg>
        <svg className="ml-[8px]" width="17" height="14" viewBox="0 0 17 14" fill="none" stroke="#fff" strokeWidth="1.100"><path d="M.7 4.500h2.500L6.500 1.500v11L3.200 9.500H.7zM9 4.800c1 1.500 1 3 0 4.500M11.500 3c2 2.500 2 5.500 0 8M14 1.300c2.800 3.500 2.800 8 0 11.500" /></svg>
        <div className={`${SEGOE} ml-[3px] w-[70px] text-center text-[11.500px] leading-[18px] tracking-[-0.25px]`}><div className="tracking-[-0.5px]">14:08</div><div>05-10-2023</div></div>
        <svg className="ml-[11px] mr-[24px]" width="18" height="18" viewBox="0 0 18 18"><path d="M10 14H6.500L4 14H1.500V1.500h15V9" fill="none" stroke="#fff" strokeWidth="1.300" /><path d="M14 9c1 4-1.500 6-5 6 1.500 2 8 2.500 8.500-2.500.1-1.500-1.500-3-3.500-3.500z" fill="#fff" /></svg>
      </div>
      <div className="absolute right-[4px] top-0 h-10 w-px bg-[#6a5c5c]" />
    </div>
  );
}

export default function App() {
  return (
    <div className="relative flex h-[768px] w-[1366px] flex-col overflow-hidden bg-[#ebebeb]">
      <BrowserTabs />
      <AddressBar />
      <Header />
      <Toolbar />
      <div className="flex h-[533px] shrink-0 bg-[#f2f2f2]">
        <Sidebar />
        <Canvas />
      </div>
      <SheetTabs />
      <div className="h-[13px] shrink-0 bg-[#ebebeb]" />
      <Taskbar />
      <div className={`${SEGOE} pointer-events-none absolute left-[1073px] top-[649px] text-[#a4a4a4]/80`}>
        <div className="text-[20px] leading-[26px] tracking-[-0.42px]">Activate Windows</div>
        <div className="whitespace-nowrap text-[14.5px] leading-[20px] tracking-[-0.04px]">Go to Settings to activate Windows.</div>
      </div>
    </div>
  );
}
